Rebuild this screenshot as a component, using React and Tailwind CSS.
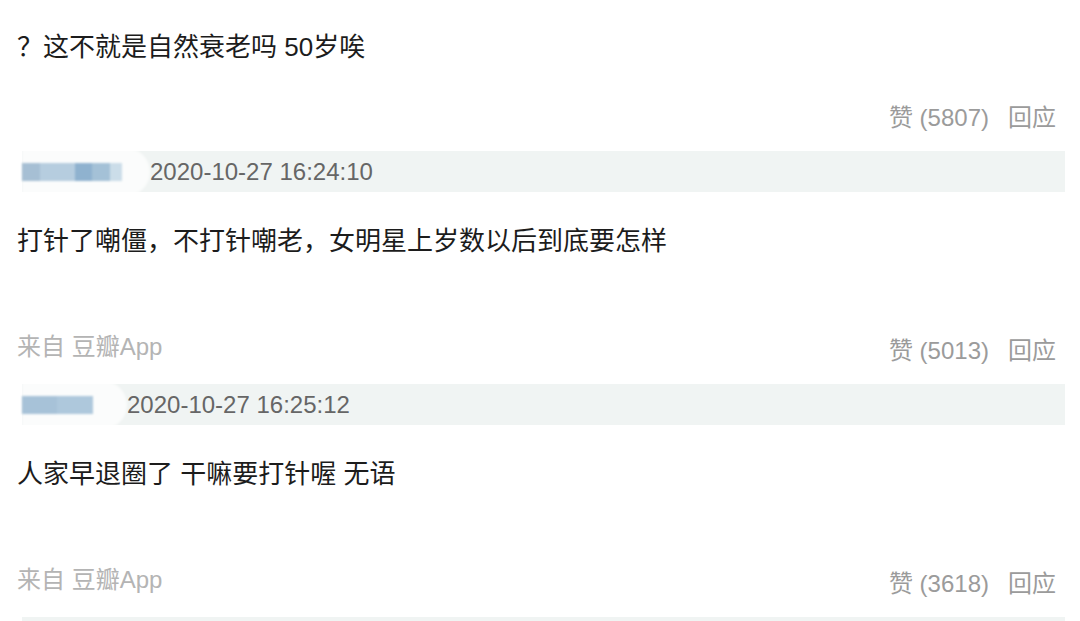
import React from 'react';

const comments = [
  {
    name: [
      ['w-[18px]', 'bg-[#a6bfd4]'],
      ['w-[35px]', 'bg-[#b6cddf]'],
      ['w-[17px]', 'bg-[#8fb2cf]'],
      ['w-[18px]', 'bg-[#a4c1d7]'],
      ['w-[12px]', 'bg-[#cbdde9]'],
    ],
    nameWidth: 'w-[128px]',
    time: '2020-10-27 16:24:10',
    text: '打针了嘲僵，不打针嘲老，女明星上岁数以后到底要怎样',
    likes: 5013,
  },
  {
    name: [
      ['w-[35px]', 'bg-[#a7c2d8]'],
      ['w-[36px]', 'bg-[#aec8dc]'],
    ],
    nameWidth: 'w-[105px]',
    time: '2020-10-27 16:25:12',
    text: '人家早退圈了 干嘛要打针喔 无语',
    likes: 3618,
  },
];

function Actions({ likes }) {
  return (
    <div className="flex items-center gap-[19px] text-[#9b9b9b] text-[24px] leading-[32px]">
      <span>赞 ({likes})</span>
      <span>回应</span>
    </div>
  );
}

function Header({ name, nameWidth, time }) {
  return (
    <div className="ml-[22px] w-[1043px] h-[41px] bg-[#f0f4f3] flex items-center">
      <div className={`${nameWidth} h-[48px] shrink-0 flex items-center bg-white/70 rounded-r-[24px] blur-[1px]`}>
        <div className="flex h-[18px]">
          {name.map(([w, c], i) => (
            <div key={i} className={`${w} ${c} h-full`} />
          ))}
        </div>
      </div>
      <span className="text-[#666] text-[24px] leading-none">{time}</span>
    </div>
  );
}

export default function App() {
  return (
    <div
      className="w-[1080px] h-[621px] bg-white overflow-hidden text-[#1c1c1c]"
      style={{ fontFamily: '"Liberation Sans", "Noto Sans CJK SC", sans-serif' }}
    >
      {/* tail of previous comment */}
      <div className="h-[151px] flex flex-col">
        <p className="pt-[29px] pl-[17px] text-[26px] leading-[36px]">？这不就是自然衰老吗 50岁唉</p>
        <div className="mt-[37px] pr-[24px] flex justify-end">
          <Actions likes={5807} />
        </div>
      </div>

      {comments.map((c, i) => (
        <div key={i}>
          <Header name={c.name} nameWidth={c.nameWidth} time={c.time} />
          <div className="h-[192px] flex flex-col">
            <p className="pt-[31px] pl-[17px] text-[26px] leading-[36px]">{c.text}</p>
            <div className="mt-auto pb-[17px] pl-[17px] pr-[24px] flex justify-between items-end">
              <span className="mb-[4px] text-[#b4b4b4] text-[24px] leading-[32px]">来自 豆瓣App</span>
              <Actions likes={c.likes} />
            </div>
          </div>
        </div>
      ))}

      <div className="ml-[22px] w-[1043px] h-[41px] bg-[#f0f4f3]" />
    </div>
  );
}
